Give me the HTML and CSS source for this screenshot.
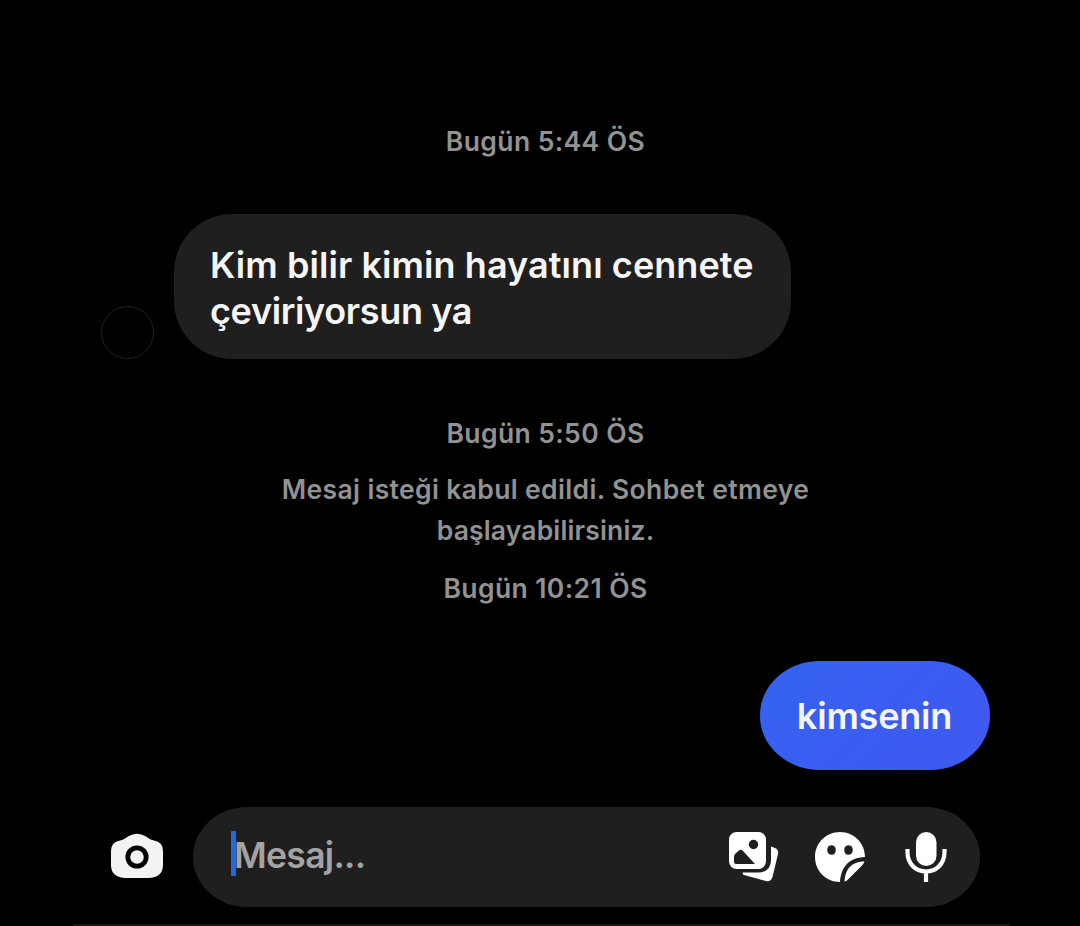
FILE: index.html
```
<!DOCTYPE html>
<html lang="tr">
<head>
    <meta charset="UTF-8">
    <meta name="viewport" content="width=device-width, initial-scale=1.0">
    <title>Mesajlar</title>
    <link rel="stylesheet" href="styles.css">
</head>
<body>
    <div class="chat">
        <div class="time">Bugün 5:44 ÖS</div>
        <div class="row received">
            <div class="avatar"></div>
            <div class="bubble"><span class="line1">Kim bilir kimin hayatını cennete</span><br><span class="line2">çeviriyorsun ya</span></div>
        </div>
        <div class="time second">Bugün 5:50 ÖS</div>
        <div class="notice"><span class="notice1">Mesaj isteği kabul edildi. Sohbet etmeye</span><br>başlayabilirsiniz.</div>
        <div class="time third">Bugün 10:21 ÖS</div>
        <div class="row sent">
            <div class="bubble">kimsenin</div>
        </div>
        <div class="composer">
            <svg class="camera" width="54" height="46" viewBox="0 0 54 46">
                <path d="M18 3.500 Q27 -2 36 3.500 L39 5.500 Q41 7 44 7.500 Q53 9 53 18 V32 Q53 44.500 38 45 H16 Q1 44.500 1 32 V18 Q1 9 10 7.500 Q13 7 15 5.500 Z" fill="#f3f3f3"/>
                <circle cx="27" cy="24" r="9.200" fill="#f3f3f3" stroke="#000" stroke-width="4.800"/>
            </svg>
            <div class="input">
                <span class="caret"></span>
                <span class="placeholder">Mesaj...</span>
                <div class="tools">
                    <svg width="50" height="52" viewBox="0 0 50 52">
                        <path d="M42 15.500 L46 17 Q50 18.500 49 23 L43.500 46 Q42 51 37 50 L15 44 Q12.500 42.500 14 41.500 H30 Q42 40.500 42 29 Z" fill="#fff"/>
                        <rect x="0" y="1" width="37" height="37" rx="7.500" fill="#fff"/>
                        <circle cx="24.500" cy="13.500" r="4.700" fill="#1f1f1f"/>
                        <path d="M5 31 V26 Q5 23.500 7 22 L10 19.500 Q12 18 14 20 L26 33 H7 Q5 33 5 31 Z" fill="#1f1f1f"/>
                    </svg>
                    <svg class="sticker" width="51" height="51" viewBox="0 0 51 51">
                        <path d="M25 0 C11 0 0 11 0 25 C0 39 11 50 25 50 C26 36 33 25.500 50 25 C50 11 39 0 25 0 Z" fill="#fff"/>
                        <path d="M29.500 49.500 C30 39 35 29.500 49.500 29.500 C49 31 47.500 33 46.500 34 L35 45.500 C33.500 47 31.500 49 29.500 49.500 Z" fill="#fff"/>
                        <ellipse cx="16.500" cy="18" rx="4.300" ry="4.800" fill="#1f1f1f"/>
                        <ellipse cx="33.500" cy="18" rx="4.300" ry="4.800" fill="#1f1f1f"/>
                    </svg>
                    <svg width="42" height="51" viewBox="0 0 42 51">
                        <rect x="11" y="0" width="20.500" height="34" rx="10.250" fill="#fff"/>
                        <path d="M2.500 17 V20 C2.500 46 39.500 46 39.500 20 V17 M21 39 V50" fill="none" stroke="#fff" stroke-width="4.200"/>
                    </svg>
                </div>
            </div>
        </div>
        <div class="bottom-line"></div>
    </div>
</body>
</html>
```
FILE: styles.css
```
body {
    margin: 0;
    background-color: #000;
    color: #f5f5f5;
    font-family: Inter, "Noto Sans", sans-serif;
}
.chat {
    width: 1080px;
    height: 926px;
    box-sizing: border-box;
    padding: 121px 90px 0 101px;
    overflow: hidden;
    display: flex;
    flex-direction: column;
}
.time,
.notice {
    color: #929292;
    font-size: 26.5px;
    font-weight: 600;
    line-height: 41px;
    letter-spacing: 0.15px;
    text-align: center;
    white-space: nowrap;
}
.time {
    letter-spacing: 0.4px;
}
.row {
    display: flex;
    align-items: flex-end;
}
.bubble {
    box-sizing: border-box;
    font-size: 36px;
    font-weight: 600;
    line-height: 46px;
    white-space: nowrap;
}
.line1 {
    letter-spacing: 0.08px;
}
.line2 {
    letter-spacing: -0.35px;
}
.received {
    height: 145px;
    margin-top: 52px;
}
.avatar {
    width: 53px;
    height: 53px;
    box-sizing: border-box;
    margin-right: 20px;
    border: 1px solid #202020;
    border-radius: 50%;
}
.received .bubble {
    width: 617px;
    height: 145px;
    padding: 28px 36px;
    border-radius: 58px;
    background-color: #1f1f1f;
}
.second {
    margin-top: 54px;
}
.notice {
    margin-top: 15px;
}
.notice1 {
    letter-spacing: 0.35px;
}
.third {
    margin-top: 17px;
}
.sent {
    justify-content: flex-end;
    margin-top: 52px;
}
.sent .bubble {
    width: 230px;
    height: 109px;
    padding: 32px 1px 0 0;
    border-radius: 60px / 54px;
    background: linear-gradient(135deg, #3463f1, #4058f1);
    letter-spacing: -0.2px;
    text-align: center;
}
.composer {
    display: flex;
    align-items: center;
    margin: 37px 10px 0 9px;
}
.camera {
    margin: -3px 29px 0 0;
}
.input {
    flex: 1;
    height: 100px;
    box-sizing: border-box;
    padding: 0 33px 0 38px;
    border-radius: 54px / 50px;
    background-color: #1f1f1f;
    display: flex;
    align-items: center;
}
.caret {
    width: 5px;
    height: 45px;
    margin-top: -8px;
    border-radius: 1px;
    background-color: #2567dd;
}
.placeholder {
    margin: -4px 0 0 -2px;
    color: #a3a3a3;
    font-size: 35.5px;
    font-weight: 600;
    letter-spacing: -0.7px;
}
.tools {
    display: flex;
    align-items: center;
    gap: 36px;
    margin-left: auto;
}
.sticker {
    margin-right: 3px;
}
.bottom-line {
    height: 2px;
    margin: 17px -20px 0 -28px;
    background-color: #151515;
}
```
